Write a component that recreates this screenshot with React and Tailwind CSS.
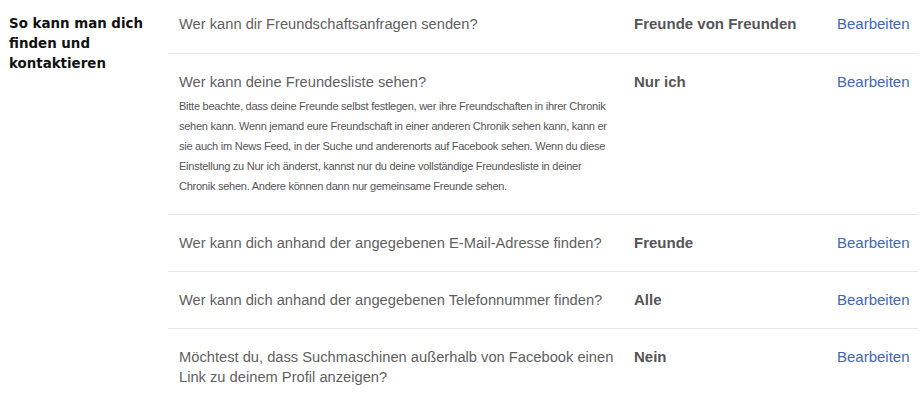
import React from 'react';

const ROWS = [
  { q: 'Wer kann dir Freundschaftsanfragen senden?', v: 'Freunde von Freunden' },
  {
    q: 'Wer kann deine Freundesliste sehen?',
    v: 'Nur ich',
    desc:
      'Bitte beachte, dass deine Freunde selbst festlegen, wer ihre Freundschaften in ihrer Chronik sehen kann. Wenn jemand eure Freundschaft in einer anderen Chronik sehen kann, kann er sie auch im News Feed, in der Suche und anderenorts auf Facebook sehen. Wenn du diese Einstellung zu Nur ich änderst, kannst nur du deine vollständige Freundesliste in deiner Chronik sehen. Andere können dann nur gemeinsame Freunde sehen.',
  },
  { q: 'Wer kann dich anhand der angegebenen E-Mail-Adresse finden?', v: 'Freunde' },
  { q: 'Wer kann dich anhand der angegebenen Telefonnummer finden?', v: 'Alle' },
  {
    q: 'Möchtest du, dass Suchmaschinen außerhalb von Facebook einen Link zu deinem Profil anzeigen?',
    v: 'Nein',
  },
];

export default function App() {
  return (
    <div
      className="flex w-[924px] h-[403px] bg-white overflow-hidden"
      style={{ fontFamily: '"Liberation Sans", Arial, sans-serif' }}
    >
      {/* Section label */}
      <div className="w-[168px] shrink-0 pl-[9px] pt-[14px]">
        <h2
          className="text-[13.4px] leading-[20px] font-bold text-[#111] w-[150px]"
          style={{ fontFamily: '"DejaVu Sans", Verdana, sans-serif' }}
        >
          So kann man dich finden und kontaktieren
        </h2>
      </div>

      {/* Settings rows */}
      <div className="w-[750px] shrink-0">
        {ROWS.map((r, i) => (
          <div
            key={r.q}
            className={
              'flex items-start pl-[11px] ' +
              (i === 0 ? 'pt-[14px] pb-[19px]' : 'border-t border-[#e5e6e9] pt-[18px] pb-[18px]')
            }
          >
            <div className="w-[455px] shrink-0 pr-[10px]">
              <div className="text-[14.7px] leading-[20px] text-[#5f5f5f]">{r.q}</div>
              {r.desc && (
                <p className="mt-[4px] w-[432px] text-[11px] leading-[20px] tracking-[-0.25px] text-[#555]">
                  {r.desc}
                </p>
              )}
            </div>
            <div className="w-[203px] shrink-0 text-[15px] leading-[20px] font-bold text-[#555]">
              {r.v}
            </div>
            <button className="text-[15px] leading-[20px] text-[#4267b2]">Bearbeiten</button>
          </div>
        ))}
      </div>
    </div>
  );
}
